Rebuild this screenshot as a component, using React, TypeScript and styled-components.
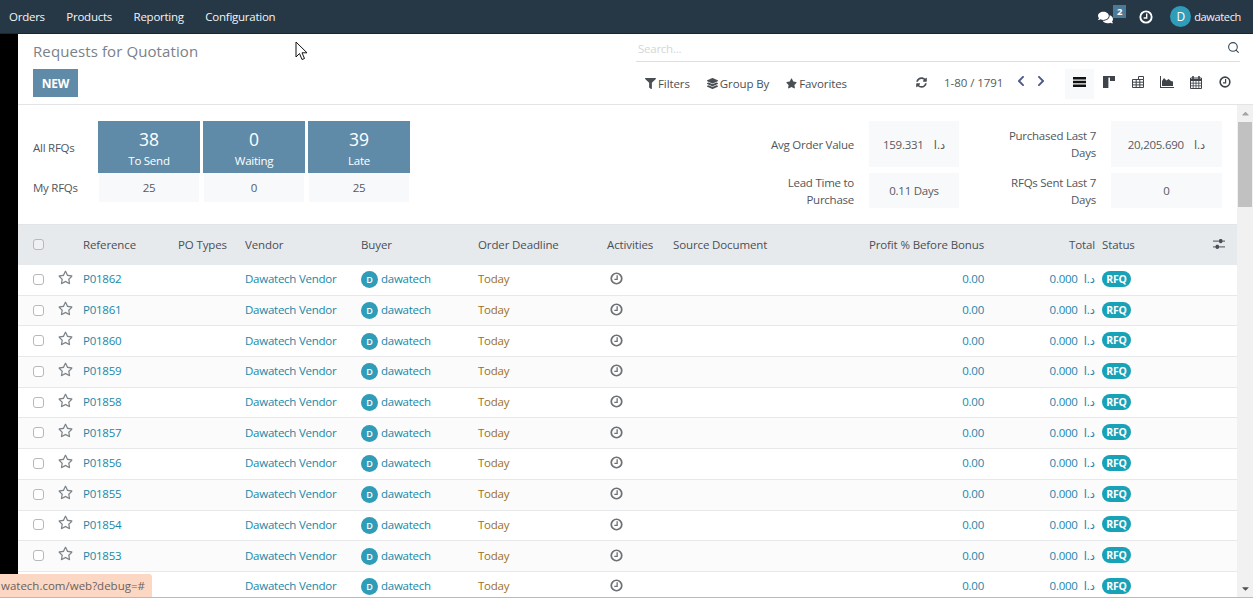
import { createGlobalStyle, styled } from 'styled-components';
import {
  FaComments,
  FaFilter,
  FaLayerGroup,
  FaStar,
  FaRegStar,
  FaSyncAlt,
  FaChevronLeft,
  FaChevronRight,
  FaCaretUp,
  FaCaretDown,
} from 'react-icons/fa';
import { Search } from 'lucide-react';

const GlobalStyle = createGlobalStyle`
  html, body { margin: 0; padding: 0; height: 100%; overflow: hidden; }
  body {
    font-family: "Open Sans", "DejaVu Sans", sans-serif;
    font-size: 11.5px;
    letter-spacing: -0.25px;
    color: #4c4c4c;
    background: #fff;
  }
  * { box-sizing: border-box; }
`;

const COLUMNS = '65px 95px 67px 116px 117px 129px 66px 120px 191px 111px 142px';

const Page = styled.div`
  position: relative;
  width: 1253px;
  height: 598px;
  display: flex;
  flex-direction: column;
  overflow: hidden;
  border-bottom: 1px solid #b4bcbc;
`;

const NavBar = styled.header`
  height: 34px;
  flex: none;
  display: flex;
  align-items: center;
  justify-content: space-between;
  padding: 0 12px 0 9px;
  background: #263745;
  color: #fff;
  border-bottom: 1px solid #1b2630;
`;

const NavMenu = styled.nav`
  display: flex;
  gap: 21.5px;
`;

const NavLink = styled.span`
  color: #f2f5f7;
`;

const UserName = styled.span`
  color: #f2f5f7;
  font-size: 11px;
  letter-spacing: -0.35px;
`;

const Systray = styled.div`
  display: flex;
  align-items: center;
`;

const MessageIcon = styled.span`
  display: flex;
  font-size: 15px;
  margin-top: 2px;
`;

const CountBadge = styled.span`
  width: 13px;
  height: 13px;
  margin: -10px 0 0 0;
  background: #4b7a98;
  font-size: 9.5px;
  font-weight: 700;
  line-height: 13px;
  text-align: center;
`;

const TrayClock = styled.span`
  display: flex;
  margin: 0 17px 0 13px;
  color: #fff;
`;

const UserAvatar = styled.span`
  width: 21px;
  height: 21px;
  margin-right: 3px;
  border-radius: 50%;
  background: #2f9db8;
  font-size: 12px;
  line-height: 21px;
  text-align: center;
`;

const Body = styled.div`
  flex: 1;
  min-height: 0;
  display: flex;
`;

const BlackRail = styled.div`
  width: 18px;
  flex: none;
  background: #000;
`;

const Main = styled.main`
  flex: 1;
  min-width: 0;
  display: flex;
  flex-direction: column;
`;

const ControlPanel = styled.section`
  height: 71px;
  flex: none;
  display: flex;
  justify-content: space-between;
  padding: 0 13px 0 15px;
  border-bottom: 1px solid #e2e4e6;
`;

const PanelLeft = styled.div`
  display: flex;
  flex-direction: column;
  align-items: flex-start;
`;

const Title = styled.h1`
  margin: 7px 0 8px;
  font-size: 15px;
  font-weight: 400;
  letter-spacing: 0.1px;
  line-height: 20px;
  color: #7a8188;
`;

const NewButton = styled.button`
  width: 45px;
  height: 28px;
  padding: 0;
  border: none;
  background: #5f8ba8;
  color: #fff;
  font: 700 12px "Open Sans", sans-serif;
  letter-spacing: -0.25px;
`;

const PanelRight = styled.div`
  width: 604px;
  display: flex;
  flex-direction: column;
`;

const SearchBar = styled.div`
  height: 28px;
  display: flex;
  align-items: center;
  justify-content: space-between;
  padding: 2px 0 0 2px;
  border-bottom: 1px solid #dcdfe2;
  color: #d4d6d8;
`;

const SearchIcon = styled.span`
  display: flex;
  margin: -3px 0 0 0;
  color: #34495a;
`;

const ToolRow = styled.div`
  display: flex;
  align-items: center;
  height: 30px;
  margin-top: 7px;
  padding-left: 9px;
`;

const FilterGroup = styled.div`
  display: flex;
  gap: 17px;
  width: 271px;
  margin-top: -2px;
  letter-spacing: -0.1px;
`;

const FilterItem = styled.span`
  display: flex;
  align-items: center;
  gap: 2px;
  color: #4a4f55;
  svg { font-size: 11px; }
`;

const Pager = styled.div`
  display: flex;
  align-items: center;
  width: 149px;
  gap: 17px;
  margin-top: -4px;
  color: #555b61;
  letter-spacing: -0.05px;
`;

const PagerRefresh = styled.span`
  display: flex;
  font-size: 11px;
  color: #4a4f55;
`;

const PagerText = styled.span`
  white-space: nowrap;
`;

const PagerArrows = styled.span`
  display: flex;
  gap: 8px;
  margin: -2px 0 0 -5px;
  color: #4d5a8a;
  font-size: 12px;
`;

const ViewSwitch = styled.div`
  display: flex;
  color: #3f444a;
`;

const ViewButton = styled.span<{ $active?: boolean }>`
  width: 29px;
  height: 30px;
  display: flex;
  align-items: center;
  justify-content: center;
  padding-bottom: 4px;
  background: ${(p) => (p.$active ? '#f8f9fa' : 'transparent')};
`;

const ContentRow = styled.div`
  flex: 1;
  min-height: 0;
  display: flex;
`;

const Scroller = styled.div`
  flex: 1;
  min-width: 0;
  overflow: hidden;
`;

const ScrollTrack = styled.div`
  width: 16px;
  flex: none;
  display: flex;
  flex-direction: column;
  align-items: center;
  background: #f1f1f1;
  font-size: 11px;
`;

const ScrollArrow = styled.span<{ $dim?: boolean }>`
  height: 17px;
  display: flex;
  align-items: center;
  color: ${(p) => (p.$dim ? '#a3a3a3' : '#505050')};
`;

const ScrollThumb = styled.div`
  width: 14px;
  height: 85px;
  margin-bottom: auto;
  background: #c1c1c1;
`;

const Dashboard = styled.section`
  height: 120px;
  display: flex;
  justify-content: space-between;
  padding: 16px 15px 0;
  border-bottom: 1px solid #e2e4e6;
`;

const RfqGrid = styled.div`
  display: grid;
  grid-template-columns: 62px 102px 102px 102px;
  grid-template-rows: 52px 29px;
  column-gap: 3px;
  align-items: center;
`;

const RfqLabel = styled.span`
  color: #51565c;
`;

const RfqTile = styled.div`
  height: 52px;
  padding-top: 7px;
  background: #5f8ba8;
  color: #fff;
  text-align: center;
`;

const RfqNumber = styled.div`
  font-size: 17.5px;
  letter-spacing: 0;
  line-height: 22px;
`;

const RfqCaption = styled.div`
  line-height: 21px;
`;

const RfqMine = styled.div`
  height: 29px;
  margin: 0 1px;
  background: #f8f9fa;
  line-height: 29px;
  text-align: center;
  color: #555b61;
`;

const StatsGrid = styled.div`
  display: grid;
  grid-template-columns: 122px 90px 122px 111px;
  grid-template-rows: 46px 35px;
  gap: 6px 15px;
`;

const StatLabel = styled.div`
  align-self: center;
  padding-left: 22px;
  text-align: right;
  line-height: 17px;
  color: #51565c;
`;

const StatValue = styled.div`
  display: flex;
  align-items: center;
  justify-content: center;
  gap: 10px;
  background: #f8f9fa;
  color: #555b61;
`;

const Head = styled.div`
  height: 40px;
  padding-bottom: 2px;
  display: grid;
  grid-template-columns: ${COLUMNS};
  align-items: center;
  background: #e7eaed;
  color: #4a4f55;
  letter-spacing: -0.12px;
`;

const HeadRight = styled.span`
  text-align: right;
`;

const RowLine = styled.div<{ $odd: boolean }>`
  height: 30.7px;
  padding-bottom: 2px;
  display: grid;
  grid-template-columns: ${COLUMNS};
  align-items: center;
  background: ${(p) => (p.$odd ? '#fbfbfb' : '#fff')};
  border-bottom: 1px solid #e6e8ea;
`;

const SelectCell = styled.div`
  display: flex;
  align-items: center;
  padding-left: 15px;
`;

const CheckBox = styled.span`
  width: 11px;
  height: 11px;
  flex: none;
  margin-top: 1px;
  border: 1px solid #b6b9bc;
  border-radius: 3px;
  background: #fff;
`;

const HeadCheckBox = styled(CheckBox)`
  margin-top: 0;
  background: #eef0f2;
`;

const StarIcon = styled.span`
  display: flex;
  margin: -3px 0 0 14px;
  font-size: 15px;
  color: #7d8489;
`;

const LinkText = styled.span`
  color: #1788a8;
`;

const BuyerCell = styled.div`
  display: flex;
  align-items: center;
  gap: 3px;
  color: #1788a8;
`;

const BuyerAvatar = styled.span`
  width: 17px;
  height: 17px;
  margin-top: 2px;
  border-radius: 50%;
  background: #2f9db8;
  color: #fff;
  font-size: 9px;
  font-weight: 600;
  line-height: 17px;
  text-align: center;
`;

const Deadline = styled.span`
  color: #9c6f1e;
`;

const ActivityIcon = styled.span`
  display: flex;
  padding-left: 3px;
  color: #6d7175;
`;

const RightCell = styled.div`
  display: flex;
  justify-content: flex-end;
  gap: 6px;
  color: #2385ad;
`;

const StatusCell = styled.div`
  display: flex;
  align-items: center;
  justify-content: space-between;
  padding: 0 12px 0 7px;
`;

const StatusBadge = styled.span`
  width: 29px;
  height: 16px;
  border-radius: 8px;
  background: #17a2b8;
  color: #fff;
  font-size: 10.5px;
  font-weight: 700;
  line-height: 16px;
  text-align: center;
`;

const StatusTip = styled.div`
  position: absolute;
  left: 0;
  bottom: 0;
  width: 152px;
  height: 23px;
  padding-left: 1px;
  border-top-right-radius: 3px;
  background: #fcd8c4;
  color: #6a625c;
  letter-spacing: 0;
  line-height: 24px;
  white-space: nowrap;
  overflow: hidden;
`;

const Pointer = styled.svg`
  position: absolute;
  left: 295px;
  top: 41px;
  width: 13px;
  height: 20px;
`;

const orders = ['P01862', 'P01861', 'P01860', 'P01859', 'P01858', 'P01857', 'P01856', 'P01855', 'P01854', 'P01853', 'P01852'];

const Clock = ({ size }: { size: number }) => (
  <svg width={size} height={size} viewBox="0 0 24 24" fill="none" stroke="currentColor">
    <circle cx="12" cy="12" r="9.7" strokeWidth="3.2" />
    <path d="M13.2 6v7.6H8" strokeWidth="2.4" />
  </svg>
);

const ListIcon = () => (
  <svg width="13" height="10" viewBox="0 0 13 10" fill="#111">
    <rect width="13" height="2.5" />
    <rect y="3.75" width="13" height="2.5" />
    <rect y="7.5" width="13" height="2.5" />
  </svg>
);

const KanbanIcon = () => (
  <svg width="12" height="12" viewBox="0 0 12 12" fill="currentColor">
    <rect width="12" height="1.6" />
    <rect width="5.4" height="12" />
    <rect x="7" width="5" height="5" />
  </svg>
);

const PivotIcon = () => (
  <svg width="12" height="12" viewBox="0 0 12 12" fill="none" stroke="currentColor">
    <path d="M.5 3.5h11v8H.5zM.5 6.2h11M.5 8.9h11M4.2 3.5v8M7.8 3.5v8M6.5 3.5V.5h5v3" strokeWidth="1" />
  </svg>
);

const GraphIcon = () => (
  <svg width="14" height="12" viewBox="0 0 14 12" fill="currentColor">
    <path d="M1 0v11h13v1H0V0z" />
    <path d="M2 10V5l2-3 2.5 2.5L8.5 3 11 5l2 .5V10z" />
  </svg>
);

const CalendarIcon = () => (
  <svg width="12" height="13" viewBox="0 0 12 13" fill="none" stroke="currentColor">
    <path d="M.5 2h11v10.5H.5z" strokeWidth="1" />
    <path d="M1 3h10v2H1z" fill="currentColor" stroke="none" />
    <path d="M.5 7.2h11M.5 9.8h11M3.2 5v7.5M6 5v7.5M8.8 5v7.5" strokeWidth=".8" />
    <path d="M3 0v3M9 0v3" strokeWidth="1.6" />
  </svg>
);

const SlidersIcon = () => (
  <svg width="12" height="10" viewBox="0 0 12 10" fill="#4a4f55">
    <rect y="1.6" width="12" height="1" />
    <rect y="7.4" width="12" height="1" />
    <rect x="6" width="3.4" height="4.2" rx="1.4" />
    <rect x="2.6" y="5.8" width="3.4" height="4.2" rx="1.4" />
  </svg>
);

export default function App() {
  return (
    <Page>
      <GlobalStyle />
      <NavBar>
        <NavMenu>
          <NavLink>Orders</NavLink>
          <NavLink>Products</NavLink>
          <NavLink>Reporting</NavLink>
          <NavLink>Configuration</NavLink>
        </NavMenu>
        <Systray>
          <MessageIcon><FaComments /></MessageIcon>
          <CountBadge>2</CountBadge>
          <TrayClock><Clock size={14} /></TrayClock>
          <UserAvatar>D</UserAvatar>
          <UserName>dawatech</UserName>
        </Systray>
      </NavBar>
      <Body>
        <BlackRail />
        <Main>
          <ControlPanel>
            <PanelLeft>
              <Title>Requests for Quotation</Title>
              <NewButton>NEW</NewButton>
            </PanelLeft>
            <PanelRight>
              <SearchBar>
                Search...
                <SearchIcon><Search size={13} strokeWidth={2} /></SearchIcon>
              </SearchBar>
              <ToolRow>
                <FilterGroup>
                  <FilterItem><FaFilter />Filters</FilterItem>
                  <FilterItem><FaLayerGroup />Group By</FilterItem>
                  <FilterItem><FaStar />Favorites</FilterItem>
                </FilterGroup>
                <Pager>
                  <PagerRefresh><FaSyncAlt /></PagerRefresh>
                  <PagerText>1-80 / 1791</PagerText>
                  <PagerArrows><FaChevronLeft /><FaChevronRight /></PagerArrows>
                </Pager>
                <ViewSwitch>
                  <ViewButton $active><ListIcon /></ViewButton>
                  <ViewButton><KanbanIcon /></ViewButton>
                  <ViewButton><PivotIcon /></ViewButton>
                  <ViewButton><GraphIcon /></ViewButton>
                  <ViewButton><CalendarIcon /></ViewButton>
                  <ViewButton><Clock size={12} /></ViewButton>
                </ViewSwitch>
              </ToolRow>
            </PanelRight>
          </ControlPanel>
          <ContentRow>
            <Scroller>
              <Dashboard>
                <RfqGrid>
                  <RfqLabel>All RFQs</RfqLabel>
                  <RfqTile><RfqNumber>38</RfqNumber><RfqCaption>To Send</RfqCaption></RfqTile>
                  <RfqTile><RfqNumber>0</RfqNumber><RfqCaption>Waiting</RfqCaption></RfqTile>
                  <RfqTile><RfqNumber>39</RfqNumber><RfqCaption>Late</RfqCaption></RfqTile>
                  <RfqLabel>My RFQs</RfqLabel>
                  <RfqMine>25</RfqMine>
                  <RfqMine>0</RfqMine>
                  <RfqMine>25</RfqMine>
                </RfqGrid>
                <StatsGrid>
                  <StatLabel>Avg Order Value</StatLabel>
                  <StatValue><span>159.331</span><span>د.ا</span></StatValue>
                  <StatLabel>Purchased Last 7 Days</StatLabel>
                  <StatValue><span>20,205.690</span><span>د.ا</span></StatValue>
                  <StatLabel>Lead Time to Purchase</StatLabel>
                  <StatValue>0.11 Days</StatValue>
                  <StatLabel>RFQs Sent Last 7 Days</StatLabel>
                  <StatValue>0</StatValue>
                </StatsGrid>
              </Dashboard>
              <Head>
                <SelectCell><HeadCheckBox /></SelectCell>
                <span>Reference</span>
                <span>PO Types</span>
                <span>Vendor</span>
                <span>Buyer</span>
                <span>Order Deadline</span>
                <span>Activities</span>
                <span>Source Document</span>
                <HeadRight>Profit % Before Bonus</HeadRight>
                <HeadRight>Total</HeadRight>
                <StatusCell>
                  <span>Status</span>
                  <SlidersIcon />
                </StatusCell>
              </Head>
              {orders.map((ref, i) => (
                <RowLine key={ref} $odd={i % 2 === 1}>
                  <SelectCell>
                    <CheckBox />
                    <StarIcon><FaRegStar /></StarIcon>
                  </SelectCell>
                  <LinkText>{ref}</LinkText>
                  <span />
                  <LinkText>Dawatech Vendor</LinkText>
                  <BuyerCell><BuyerAvatar>D</BuyerAvatar>dawatech</BuyerCell>
                  <Deadline>Today</Deadline>
                  <ActivityIcon><Clock size={13} /></ActivityIcon>
                  <span />
                  <RightCell>0.00</RightCell>
                  <RightCell><span>0.000</span><span>د.ا</span></RightCell>
                  <StatusCell>
                    <StatusBadge>RFQ</StatusBadge>
                  </StatusCell>
                </RowLine>
              ))}
            </Scroller>
            <ScrollTrack>
              <ScrollArrow $dim><FaCaretUp /></ScrollArrow>
              <ScrollThumb />
              <ScrollArrow><FaCaretDown /></ScrollArrow>
            </ScrollTrack>
          </ContentRow>
        </Main>
      </Body>
      <StatusTip>watech.com/web?debug=#</StatusTip>
      <Pointer viewBox="0 0 13 20">
        <path d="M1 1 L1 16 L4.5 12.5 L7 18.5 L9.5 17.5 L7 11.8 L12 11.8 Z" fill="#fff" stroke="#111" strokeWidth="1" />
      </Pointer>
    </Page>
  );
}
